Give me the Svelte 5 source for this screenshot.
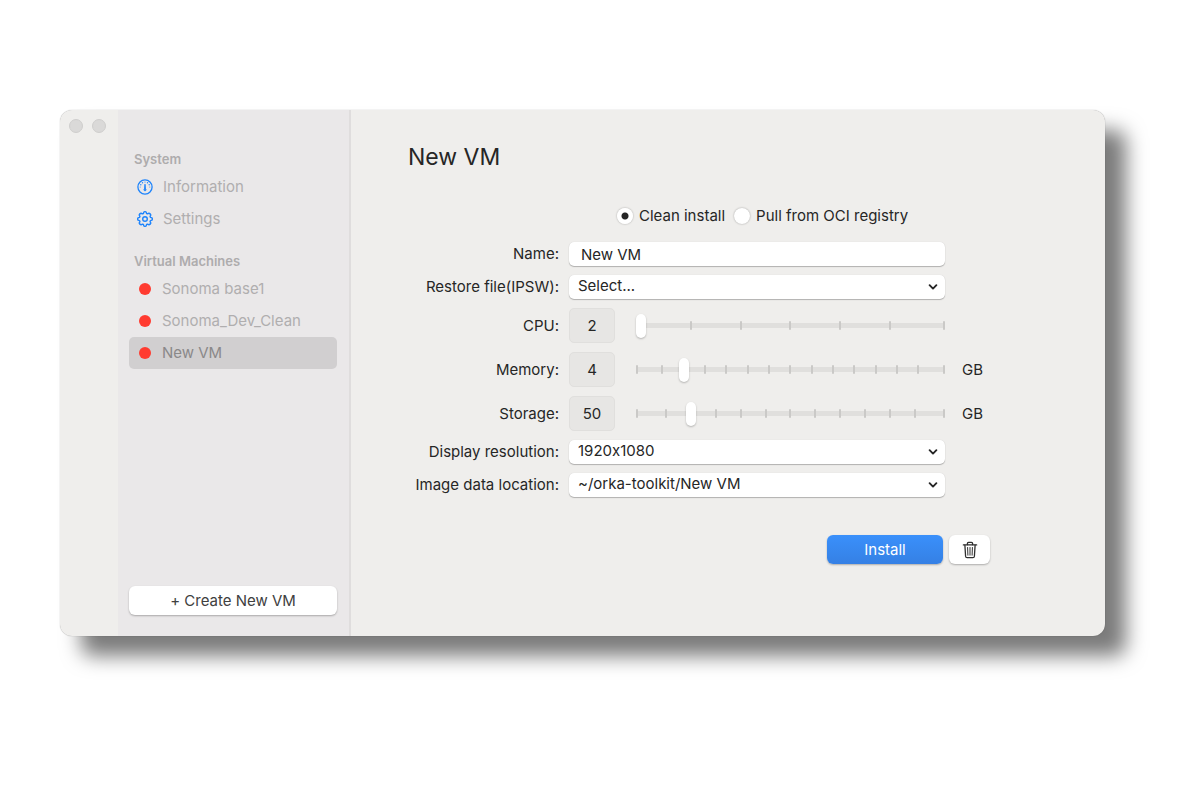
<script>
  let source = $state('clean');
  let name = $state('New VM');
  let restore = $state('Select...');
  let resolution = $state('1920x1080');
  let location = $state('~/orka-toolkit/New VM');
  let selected = $state('New VM');

  const machines = ['Sonoma base1', 'Sonoma_Dev_Clean', 'New VM'];

  let sliders = $state([
    { id: 'cpu', label: 'CPU', value: 2, min: 2, max: 8, step: 1, unit: '' },
    { id: 'memory', label: 'Memory', value: 4, min: 2, max: 16, step: 1, unit: 'GB' },
    { id: 'storage', label: 'Storage', value: 50, min: 30, max: 150, step: 10, unit: 'GB' }
  ]);

  const tickCount = (s) => (s.max - s.min) / s.step + 1;
</script>

{#snippet chevron()}
  <svg class="chevron" viewBox="0 0 10 8" aria-hidden="true">
    <path d="M1.6 2.2 5 5.6 8.4 2.2" fill="none" stroke="#262626" stroke-width="1.9" stroke-linecap="round" stroke-linejoin="round" />
  </svg>
{/snippet}

<div class="window">
  <div class="gutter">
    <span class="light"></span>
    <span class="light"></span>
  </div>

  <aside class="sidebar">
    <nav>
      <section>
        <h2>System</h2>
        <ul>
          <li>
            <a class="item" href="#information">
              <svg class="icon" viewBox="0 0 16 16" aria-hidden="true" fill="none" stroke="#1f84fb">
                <circle cx="8" cy="8" r="7.1" stroke-width="1.3" />
                <path d="M8 5.2 8.5 10a1 1 0 1 1-1 0Z" fill="#1f84fb" stroke-width="0.9" stroke-linejoin="round" />
                <g fill="#1f84fb" stroke="none">
                  <circle cx="8" cy="3" r="0.6" />
                  <circle cx="5.5" cy="3.8" r="0.7" />
                  <circle cx="10.5" cy="3.8" r="0.7" />
                  <circle cx="3.8" cy="5.7" r="0.7" />
                  <circle cx="12.2" cy="5.7" r="0.7" />
                  <circle cx="3.2" cy="8" r="0.5" />
                  <circle cx="12.8" cy="8" r="0.5" />
                </g>
              </svg>
              Information
            </a>
          </li>
          <li>
            <a class="item" href="#settings">
              <svg class="icon" viewBox="0 0 16 16" aria-hidden="true" fill="none" stroke="#1f84fb" stroke-width="1.4" stroke-linejoin="round">
                <path d="M6.9 1 Q8 .3 9.1 1 L9.6 2.5 L10.6 2.9 L12 2.2 Q13.4 2.5 13.8 4 L13.1 5.4 L13.5 6.4 L15 6.9 Q15.7 8 15 9.1 L13.5 9.6 L13.1 10.6 L13.8 12 Q13.5 13.4 12 13.8 L10.6 13.1 L9.6 13.5 L9.1 15 Q8 15.7 6.9 15 L6.4 13.5 L5.4 13.1 L4 13.8 Q2.6 13.5 2.2 12 L2.9 10.6 L2.5 9.6 L1 9.1 Q.3 8 1 6.9 L2.5 6.4 L2.9 5.4 L2.2 4 Q2.5 2.6 4 2.2 L5.4 2.9 L6.4 2.5Z" />
                <circle cx="8" cy="8" r="2.3" />
              </svg>
              Settings
            </a>
          </li>
        </ul>
      </section>
      <section>
        <h2>Virtual Machines</h2>
        <ul>
          {#each machines as machine}
            <li>
              <a class="item" class:selected={selected === machine} href="#vm" onclick={() => (selected = machine)}>
                <span class="dot"></span>{machine}
              </a>
            </li>
          {/each}
        </ul>
      </section>
    </nav>
    <button class="create" type="button">+ Create New VM</button>
  </aside>

  <main>
    <h1>New VM</h1>
    <form onsubmit={(e) => e.preventDefault()}>
      <div class="source" role="radiogroup" aria-label="Source">
        <label><input type="radio" name="source" value="clean" bind:group={source} />Clean install</label>
        <label><input type="radio" name="source" value="oci" bind:group={source} />Pull from OCI registry</label>
      </div>

      <div class="row">
        <label for="name">Name:</label>
        <input id="name" class="text" type="text" bind:value={name} />
      </div>
      <div class="row">
        <label for="restore">Restore file(IPSW):</label>
        <div class="select">
          <select id="restore" bind:value={restore}><option>Select...</option></select>
          {@render chevron()}
        </div>
      </div>
      {#each sliders as s}
        <div class="row">
          <label for={s.id}>{s.label}:</label>
          <div class="amount">
            <output for={s.id}>{s.value}</output>
            <div class="slider">
              <div class="track"></div>
              <div class="ticks">
                {#each Array(tickCount(s)) as _}<span></span>{/each}
              </div>
              <input id={s.id} type="range" min={s.min} max={s.max} step={s.step} bind:value={s.value} />
            </div>
          </div>
          <span>{s.unit}</span>
        </div>
      {/each}
      <div class="row">
        <label for="resolution">Display resolution:</label>
        <div class="select">
          <select id="resolution" bind:value={resolution}><option>1920x1080</option></select>
          {@render chevron()}
        </div>
      </div>
      <div class="row">
        <label for="location">Image data location:</label>
        <div class="select">
          <select id="location" bind:value={location}><option>~/orka-toolkit/New VM</option></select>
          {@render chevron()}
        </div>
      </div>

      <div class="actions">
        <button class="install" type="submit">Install</button>
        <button class="trash" type="button" aria-label="Delete">
          <svg viewBox="0 0 16 18" aria-hidden="true" fill="none" stroke="#2e2e2e" stroke-linecap="round" stroke-linejoin="round">
            <path d="M1.4 3.9h13.2" stroke-width="1.4" />
            <path d="M5.4 3.7V2.4q0-1.1 1.1-1.1h3q1.1 0 1.1 1.1v1.3" stroke-width="1.3" />
            <path d="m2.9 4.2.7 11q.1 1.5 1.5 1.5h5.8q1.4 0 1.5-1.5l.7-11" stroke-width="1.3" />
            <path d="m5.6 6.5.3 7.7M8 6.5v7.7M10.4 6.5l-.3 7.7" stroke-width="1" />
          </svg>
        </button>
      </div>
    </form>
  </main>
</div>

<style>
  :global(body) {
    margin: 0;
    background: #fff;
  }

  .window,
  .window * {
    box-sizing: border-box;
  }

  .window {
    display: flex;
    margin: 110px 95px 110px 60px;
    border-radius: 12px;
    background: #efeeec;
    color: #262626;
    font: 15px/20px Inter, 'Liberation Sans', sans-serif;
    font-variant-ligatures: no-contextual;
    box-shadow:
      0 0 1px rgba(0, 0, 0, 0.4),
      21px 20px 20px rgba(0, 0, 0, 0.52);
  }

  .gutter {
    flex: 0 0 58px;
    display: flex;
    gap: 9px;
    padding: 9px 0 0 9px;
  }

  .light {
    width: 14px;
    height: 14px;
    border: 1px solid #cfcecd;
    border-radius: 50%;
    background: #dad9d8;
    flex: none;
  }

  .sidebar {
    flex: 0 0 233px;
    display: flex;
    flex-direction: column;
    justify-content: space-between;
    padding: 38px 12px 21px 11px;
    border-right: 2px solid #dfdddd;
    background: #eae8e9;
  }

  nav {
    display: flex;
    flex-direction: column;
    gap: 15px;
  }

  h2 {
    margin: 0 0 1px;
    padding-left: 5px;
    color: #aeacad;
    font-size: 13px;
    font-weight: 600;
    line-height: 22px;
  }

  ul {
    margin: 0;
    padding: 0;
    list-style: none;
  }

  .item {
    display: flex;
    align-items: center;
    gap: 10px;
    height: 32px;
    padding-left: 8px;
    border-radius: 5px;
    color: #b0aeaf;
    text-decoration: none;
  }

  .item.selected {
    background: #d1cfd0;
    color: #8a8889;
  }

  .icon {
    width: 16px;
    height: 16px;
    flex: none;
  }

  .dot {
    width: 12px;
    height: 12px;
    margin: 0 1px 0 2px;
    border-radius: 50%;
    background: #ff3b30;
    flex: none;
  }

  button {
    border: 0;
    font: inherit;
    color: inherit;
  }

  .create {
    height: 29px;
    border-radius: 6px;
    background: #fff;
    color: #404040;
    box-shadow: 0 1px 2px rgba(0, 0, 0, 0.28);
  }

  main {
    flex: 1;
    min-width: 0;
    padding: 32px 115px 72px 57px;
  }

  h1 {
    margin: 0 0 34px;
    font-size: 23px;
    font-weight: 400;
    line-height: 30px;
  }

  form {
    display: flex;
    flex-direction: column;
    gap: 9px;
  }

  .source {
    display: flex;
    gap: 9px;
    margin-bottom: 7px;
    padding-left: 209px;
  }

  .source label {
    display: flex;
    align-items: center;
    gap: 6px;
    white-space: nowrap;
  }

  input[type='radio'] {
    appearance: none;
    width: 16px;
    height: 16px;
    margin: 0;
    border-radius: 50%;
    background: #fff;
    box-shadow: 0 0 2px rgba(0, 0, 0, 0.35);
  }

  input[type='radio']:checked {
    background: radial-gradient(circle, #262626 3px, #fff 4px);
  }

  .row {
    display: grid;
    grid-template-columns: 151px minmax(0, 1fr) 28px;
    column-gap: 10px;
    align-items: center;
  }

  .row > label {
    text-align: right;
    white-space: nowrap;
  }

  .row > .text,
  .select,
  .amount {
    margin-right: 7px;
  }

  .text,
  select {
    height: 24px;
    border: 0;
    border-radius: 5px;
    background: #fff;
    color: inherit;
    font: inherit;
    font-variant-ligatures: inherit;
    box-shadow: 0 1px 1px rgba(0, 0, 0, 0.25), 0 0 1px rgba(0, 0, 0, 0.15);
  }

  .text {
    min-width: 0;
    padding: 0 12px;
  }

  .select {
    display: grid;
    align-items: center;
  }

  .select > * {
    grid-area: 1 / 1;
  }

  select {
    appearance: none;
    width: 100%;
    padding: 0 30px 2px 9px;
  }

  .chevron {
    justify-self: end;
    width: 10px;
    height: 8px;
    margin-right: 7px;
    pointer-events: none;
  }

  .amount {
    display: flex;
    align-items: center;
    gap: 21px;
  }

  output {
    flex: 0 0 46px;
    height: 35px;
    border: 1px solid #e0dfdd;
    border-radius: 5px;
    background: #e7e6e4;
    line-height: 33px;
    text-align: center;
  }

  .slider {
    flex: 1;
    display: grid;
    align-items: center;
  }

  .slider > * {
    grid-area: 1 / 1;
  }

  .track {
    height: 5px;
    border-radius: 2px;
    background: #e0dfdd;
  }

  .ticks {
    display: flex;
    justify-content: space-between;
    padding: 0 4px;
  }

  .ticks span {
    width: 2px;
    height: 9px;
    border-radius: 1px;
    background: #cac9c7;
  }

  .ticks span:first-child {
    margin: 0 4px 0 -4px;
  }

  .ticks span:last-child {
    margin: 0 -4px 0 4px;
  }

  input[type='range'] {
    appearance: none;
    width: 100%;
    height: 24px;
    margin: 0;
    background: transparent;
  }

  input[type='range']::-webkit-slider-thumb {
    appearance: none;
    width: 10px;
    height: 24px;
    border-radius: 5px;
    background: #fff;
    box-shadow: 0 1px 2px rgba(0, 0, 0, 0.25);
  }

  .actions {
    display: flex;
    justify-content: flex-end;
    gap: 6px;
    margin-top: 29px;
  }

  .actions button {
    height: 29px;
    border-radius: 6px;
    box-shadow: 0 1px 2px rgba(0, 0, 0, 0.28);
  }

  .actions .install {
    width: 116px;
    background: linear-gradient(#3a90fb, #3580e4);
    color: #fff;
  }

  .trash {
    display: grid;
    place-items: center;
    width: 41px;
    padding: 0;
    background: #fff;
  }

  .trash svg {
    width: 16px;
    height: 18px;
  }
</style>
